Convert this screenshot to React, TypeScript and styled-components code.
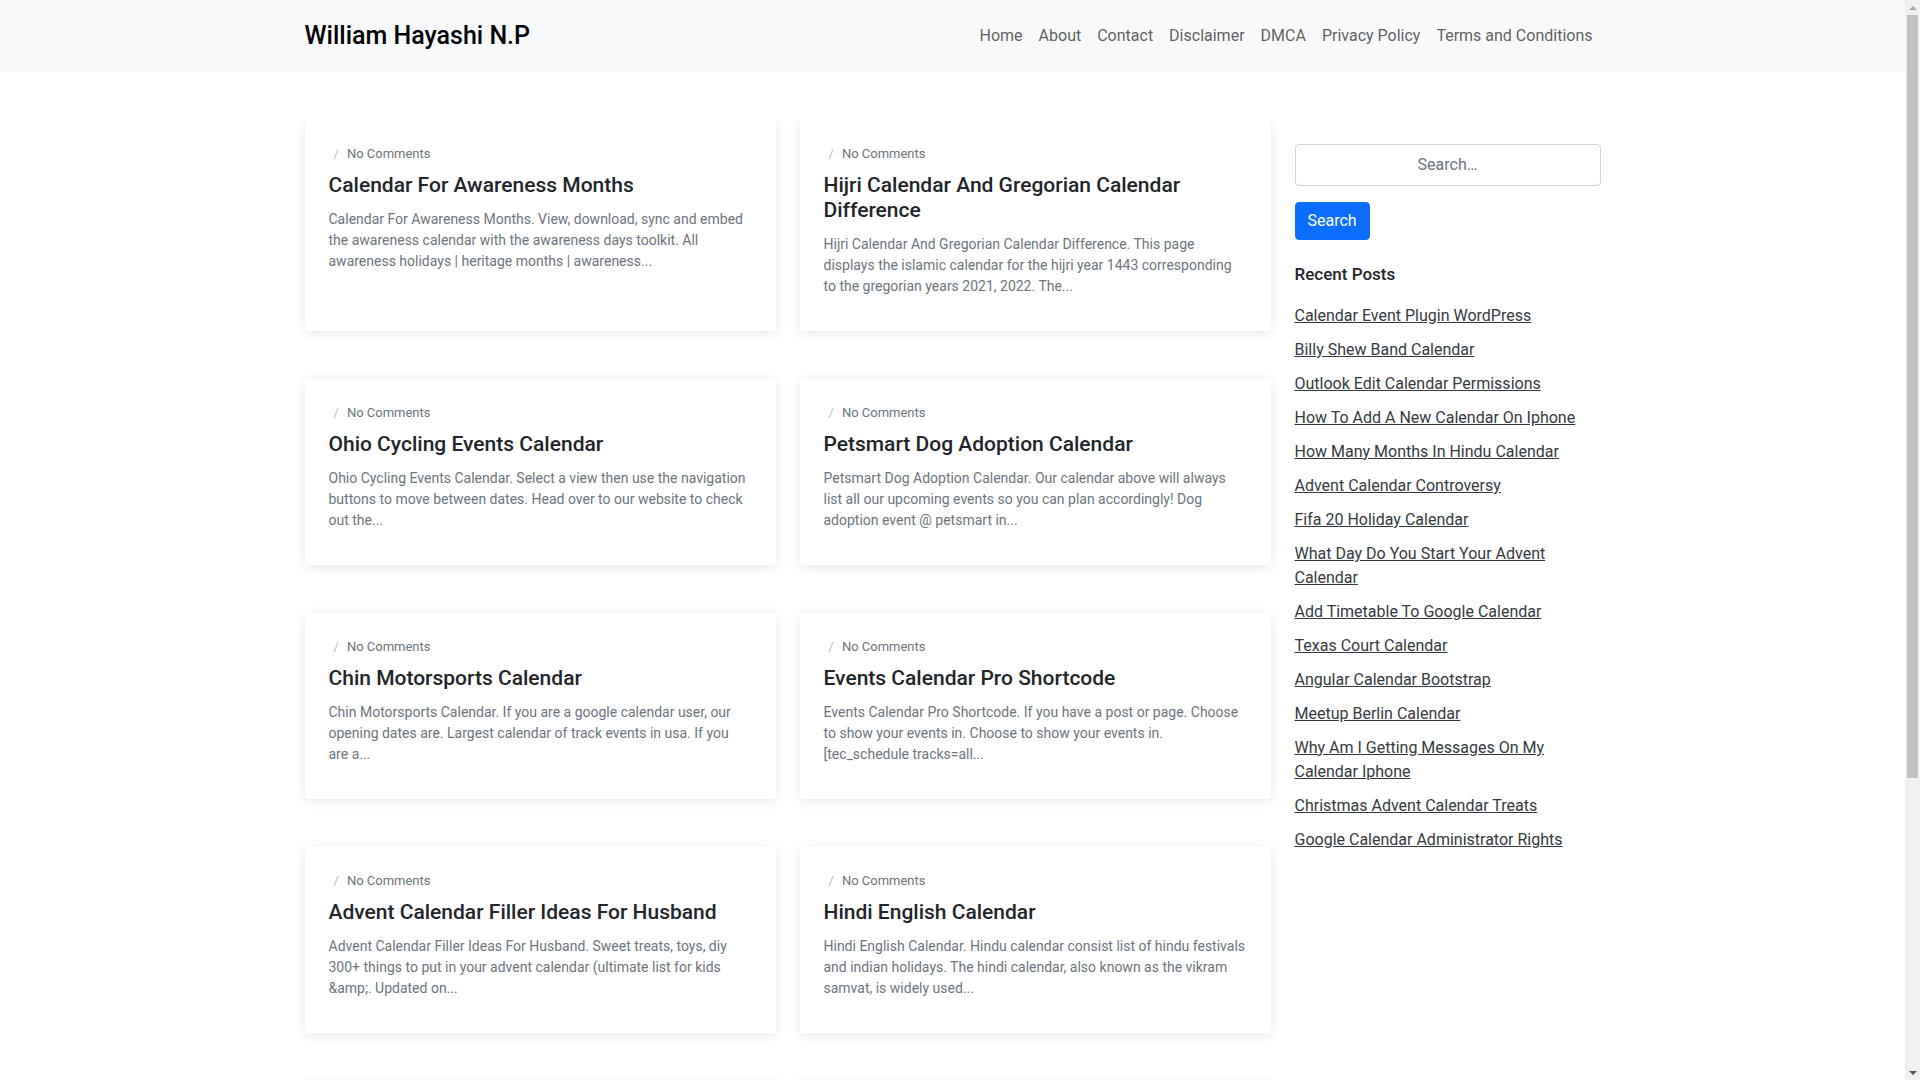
import React from "react";
import styled, { createGlobalStyle } from "styled-components";

const GlobalStyle = createGlobalStyle`
  html, body {
    margin: 0;
    height: 100%;
    overflow: hidden;
    background: #fff;
  }
  body {
    font-family: Roboto, "Liberation Sans", sans-serif;
    font-size: 16px;
    line-height: 1.5;
    color: #212529;
  }
  * {
    box-sizing: border-box;
  }
`;

const Viewport = styled.div`
  display: flex;
  height: 1080px;
  overflow: hidden;
`;

const Page = styled.div`
  flex: 1;
  min-width: 0;
  overflow: hidden;
`;

const Track = styled.div`
  width: 15px;
  height: 100%;
  background: #f1f1f1;
  display: flex;
  flex-direction: column;
  align-items: center;
`;

const Arrow = styled.div<{ $down?: boolean }>`
  width: 15px;
  height: 15px;
  flex: none;
  display: flex;
  align-items: center;
  justify-content: center;
  margin-top: ${(p) => (p.$down ? "auto" : "0")};
  &::before {
    content: "";
    border-left: 4px solid transparent;
    border-right: 4px solid transparent;
    ${(p) =>
      p.$down
        ? "border-top: 4px solid #505050;"
        : "border-bottom: 4px solid #a3a3a3;"}
  }
`;

const Thumb = styled.div`
  width: 11px;
  height: 763px;
  background: #c1c1c1;
`;

const Header = styled.nav`
  height: 72px;
  background: #f8f9fa;
`;

const Container = styled.div`
  width: 1320px;
  margin: 0 auto;
  padding: 0 12px;
`;

const HeaderRow = styled(Container)`
  height: 100%;
  display: flex;
  align-items: center;
  justify-content: space-between;
`;

const Brand = styled.a`
  font-size: 25px;
  font-weight: 500;
  color: #000;
  text-decoration: none;
`;

const NavList = styled.div`
  display: flex;
`;

const NavLink = styled.a`
  padding: 8px;
  color: rgba(0, 0, 0, 0.65);
  text-decoration: none;
`;

const Content = styled(Container)`
  display: flex;
  gap: 24px;
  padding-top: 48px;
`;

// the shadow of the first row stops at the top of the list
const Main = styled.main`
  width: 966px;
  flex: none;
  display: grid;
  grid-template-columns: 471px 471px;
  column-gap: 24px;
  row-gap: 48px;
  align-items: stretch;
  clip-path: inset(0 -40px -40px -40px);
`;

const Card = styled.article`
  padding: 24px;
  background: #fff;
  box-shadow: 0 2px 12px rgba(0, 0, 0, 0.1);
`;

const Meta = styled.div`
  font-size: 13px;
  color: #6c757d;
  line-height: 20px;
  display: flex;
  gap: 8px;
  padding-left: 5px;
`;

const Slash = styled.span`
  color: #bbb;
`;

const CardTitle = styled.h5`
  margin: 9px 0 11px;
  font-size: 21px;
  font-weight: 500;
  line-height: 25px;
  color: #212529;
`;

const Excerpt = styled.p`
  margin: 0 0 10px;
  font-size: 14px;
  line-height: 21px;
  color: #6c757d;
`;

const Sidebar = styled.aside`
  width: 306px;
  flex: none;
  padding-top: 24px;
`;

const SearchInput = styled.input`
  display: block;
  width: 100%;
  height: 42px;
  padding: 5px 12px 7px;
  border: 1px solid #ced4da;
  border-radius: 4px;
  font: inherit;
  text-align: center;
  &::placeholder {
    color: #6c757d;
    opacity: 1;
  }
`;

const SearchButton = styled.button`
  display: block;
  margin-top: 16px;
  height: 38px;
  padding: 6px 12px;
  border: 1px solid #0d6efd;
  border-radius: 4px;
  background: #0d6efd;
  color: #fff;
  font: inherit;
`;

const SideTitle = styled.h5`
  margin: 24px 0 20px;
  font-size: 17px;
  font-weight: 500;
  line-height: 20px;
  color: #212529;
`;

const PostList = styled.ul`
  list-style: none;
  margin: 0;
  padding: 0;
`;

const PostItem = styled.li`
  margin-bottom: 10px;
`;

const PostLink = styled.a`
  color: #343a40;
  text-decoration: underline;
`;

const navItems = [
  "Home",
  "About",
  "Contact",
  "Disclaimer",
  "DMCA",
  "Privacy Policy",
  "Terms and Conditions",
];

const posts = [
  {
    title: "Calendar For Awareness Months",
    text: "Calendar For Awareness Months. View, download, sync and embed the awareness calendar with the awareness days toolkit. All awareness holidays | heritage months | awareness...",
  },
  {
    title: "Hijri Calendar And Gregorian Calendar Difference",
    text: "Hijri Calendar And Gregorian Calendar Difference. This page displays the islamic calendar for the hijri year 1443 corresponding to the gregorian years 2021, 2022. The...",
  },
  {
    title: "Ohio Cycling Events Calendar",
    text: "Ohio Cycling Events Calendar. Select a view then use the navigation buttons to move between dates. Head over to our website to check out the...",
  },
  {
    title: "Petsmart Dog Adoption Calendar",
    text: "Petsmart Dog Adoption Calendar. Our calendar above will always list all our upcoming events so you can plan accordingly! Dog adoption event @ petsmart in...",
  },
  {
    title: "Chin Motorsports Calendar",
    text: "Chin Motorsports Calendar. If you are a google calendar user, our opening dates are. Largest calendar of track events in usa. If you are a...",
  },
  {
    title: "Events Calendar Pro Shortcode",
    text: "Events Calendar Pro Shortcode. If you have a post or page. Choose to show your events in. Choose to show your events in. [tec_schedule tracks=all...",
  },
  {
    title: "Advent Calendar Filler Ideas For Husband",
    text: "Advent Calendar Filler Ideas For Husband. Sweet treats, toys, diy 300+ things to put in your advent calendar (ultimate list for kids &amp;. Updated on...",
  },
  {
    title: "Hindi English Calendar",
    text: "Hindi English Calendar. Hindu calendar consist list of hindu festivals and indian holidays. The hindi calendar, also known as the vikram samvat, is widely used...",
  },
  { title: "", text: "" },
  { title: "", text: "" },
];

const recent = [
  "Calendar Event Plugin WordPress",
  "Billy Shew Band Calendar",
  "Outlook Edit Calendar Permissions",
  "How To Add A New Calendar On Iphone",
  "How Many Months In Hindu Calendar",
  "Advent Calendar Controversy",
  "Fifa 20 Holiday Calendar",
  "What Day Do You Start Your Advent Calendar",
  "Add Timetable To Google Calendar",
  "Texas Court Calendar",
  "Angular Calendar Bootstrap",
  "Meetup Berlin Calendar",
  "Why Am I Getting Messages On My Calendar Iphone",
  "Christmas Advent Calendar Treats",
  "Google Calendar Administrator Rights",
];

export default function App() {
  return (
    <Viewport>
      <GlobalStyle />
      <Page>
        <Header>
          <HeaderRow>
            <Brand href="#">William Hayashi N.P</Brand>
            <NavList>
              {navItems.map((item) => (
                <NavLink href="#" key={item}>
                  {item}
                </NavLink>
              ))}
            </NavList>
          </HeaderRow>
        </Header>
        <Content>
          <Main>
            {posts.map((post, i) => (
              <Card key={i}>
                {post.title && (
                  <>
                    <Meta>
                      <Slash>/</Slash>
                      <span>No Comments</span>
                    </Meta>
                    <CardTitle>{post.title}</CardTitle>
                    <Excerpt>{post.text}</Excerpt>
                  </>
                )}
              </Card>
            ))}
          </Main>
          <Sidebar>
            <SearchInput placeholder="Search…" />
            <SearchButton>Search</SearchButton>
            <SideTitle>Recent Posts</SideTitle>
            <PostList>
              {recent.map((item) => (
                <PostItem key={item}>
                  <PostLink href="#">{item}</PostLink>
                </PostItem>
              ))}
            </PostList>
          </Sidebar>
        </Content>
      </Page>
      <Track>
        <Arrow />
        <Thumb />
        <Arrow $down />
      </Track>
    </Viewport>
  );
}
